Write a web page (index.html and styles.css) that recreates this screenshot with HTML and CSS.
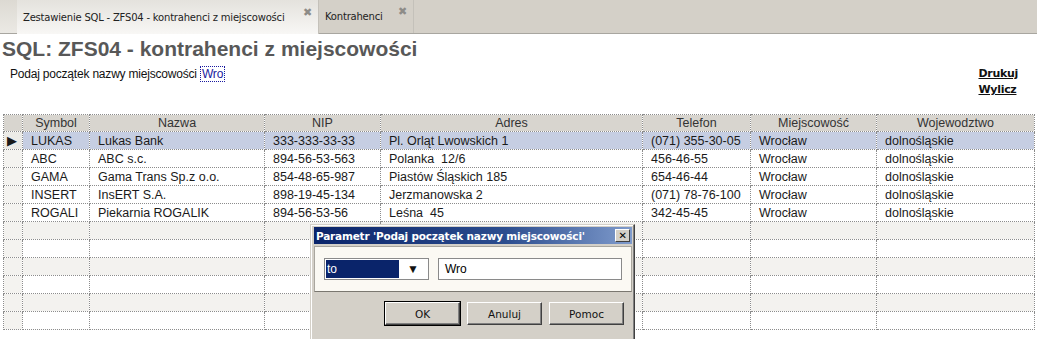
FILE: index.html
```html
<!DOCTYPE html>
<html lang="pl">
<head>
  <meta charset="UTF-8" />
  <title>Zestawienie SQL - ZFS04</title>
  <link rel="stylesheet" href="styles.css">
</head>
<body>
  <div class="tabs">
    <div class="tab-gap"></div>
    <div class="tab active">Zestawienie SQL - ZFS04 - kontrahenci z miejscowości <span class="close">&#x2716;</span></div>
    <div class="tab">Kontrahenci <span class="close">&#x2716;</span></div>
  </div>

  <div class="page">
    <h1 class="title">SQL: ZFS04 - kontrahenci z miejscowości</h1>
    <div class="params">
      <div class="param">Podaj początek nazwy miejscowości <a href="#" class="param-val">Wro</a></div>
      <div class="actions">
        <a href="#">Drukuj</a>
        <a href="#">Wylicz</a>
      </div>
    </div>

    <table class="grid">
      <colgroup>
        <col style="width:19px"><col style="width:67px"><col style="width:175px"><col style="width:116px">
        <col style="width:262px"><col style="width:108px"><col style="width:126px"><col style="width:158px">
      </colgroup>
      <thead>
        <tr><th></th><th>Symbol</th><th>Nazwa</th><th>NIP</th><th>Adres</th><th>Telefon</th><th>Miejscowość</th><th>Wojewodztwo</th></tr>
      </thead>
      <tbody>
        <tr class="sel"><td class="ind">&#9654;</td><td>LUKAS</td><td>Lukas Bank</td><td>333-333-33-33</td><td>Pl. Orląt Lwowskich 1</td><td>(071) 355-30-05</td><td>Wrocław</td><td>dolnośląskie</td></tr>
        <tr><td class="ind"></td><td>ABC</td><td>ABC s.c.</td><td>894-56-53-563</td><td>Polanka&nbsp; 12/6</td><td>456-46-55</td><td>Wrocław</td><td>dolnośląskie</td></tr>
        <tr><td class="ind"></td><td>GAMA</td><td>Gama Trans Sp.z o.o.</td><td>854-48-65-987</td><td>Piastów Śląskich 185</td><td>654-46-44</td><td>Wrocław</td><td>dolnośląskie</td></tr>
        <tr><td class="ind"></td><td>INSERT</td><td>InsERT S.A.</td><td>898-19-45-134</td><td>Jerzmanowska 2</td><td>(071) 78-76-100</td><td>Wrocław</td><td>dolnośląskie</td></tr>
        <tr><td class="ind"></td><td>ROGALI</td><td>Piekarnia ROGALIK</td><td>894-56-53-56</td><td>Leśna&nbsp; 45</td><td>342-45-45</td><td>Wrocław</td><td>dolnośląskie</td></tr>
        <tr class="empty odd"><td class="ind"></td><td></td><td></td><td></td><td></td><td></td><td></td><td></td></tr>
        <tr class="empty"><td class="ind"></td><td></td><td></td><td></td><td></td><td></td><td></td><td></td></tr>
        <tr class="empty odd"><td class="ind"></td><td></td><td></td><td></td><td></td><td></td><td></td><td></td></tr>
        <tr class="empty"><td class="ind"></td><td></td><td></td><td></td><td></td><td></td><td></td><td></td></tr>
        <tr class="empty odd"><td class="ind"></td><td></td><td></td><td></td><td></td><td></td><td></td><td></td></tr>
        <tr class="empty"><td class="ind"></td><td></td><td></td><td></td><td></td><td></td><td></td><td></td></tr>
      </tbody>
    </table>
  </div>

  <div class="dialog">
    <div class="dlg-title">
      <span>Parametr 'Podaj początek nazwy miejscowości'</span>
      <span class="dlg-x">&#x2715;</span>
    </div>
    <div class="dlg-panel">
      <div class="combo">
        <span class="combo-val">to</span>
        <span class="combo-btn">&#9660;</span>
      </div>
      <div class="text-input">Wro</div>
    </div>
    <div class="dlg-buttons">
      <button class="btn default">OK</button>
      <button class="btn">Anuluj</button>
      <button class="btn">Pomoc</button>
    </div>
  </div>
</body>
</html>
```

FILE: styles.css
```css
* {
  box-sizing: border-box;
}
body {
  margin: 0;
  background: #fff;
  font-family: 'Liberation Sans', Arial, sans-serif;
  position: relative;
  height: 339px;
  overflow: hidden;
}
.tabs {
  display: flex;
  align-items: flex-end;
  height: 34px;
  background: #d4d0c8;
  border-bottom: 1px solid #a8a6a0;
}
.tab-gap {
  width: 17px;
  height: 34px;
  background: linear-gradient(#dcd9d2, #ebe9e4);
}
.tab {
  height: 33px;
  display: flex;
  align-items: center;
  padding: 0 6px 0 6px;
  font-family: 'DejaVu Sans', sans-serif;
  font-size: 10px;
  letter-spacing: -0.2px;
  color: #222;
  border-right: 1px solid #c4c1ba;
}
.tab.active {
  width: 302px;
  background: linear-gradient(#e4e2dd, #f8f7f5);
  margin-bottom: -1px;
  height: 34px;
}
.tab:not(.active) {
  width: 95px;
  overflow: hidden;
}
.close {
  margin-left: auto;
  color: #8e8c88;
  font-size: 11px;
  position: relative;
  top: -5px;
}
.page {
  padding: 0 3px;
}
.title {
  margin: 4px 0 0 -1px;
  font-size: 21px;
  font-weight: bold;
  color: #585858;
  line-height: 22px;
}
.params {
  display: flex;
  justify-content: space-between;
  margin-top: 7px;
  height: 47px;
}
.param {
  font-size: 12px;
  color: #111;
  padding-left: 7px;
  letter-spacing: -0.2px;
}
.param-val {
  color: #1a1aa0;
  text-decoration: none;
  border: 1px dotted #1a1aa0;
  padding: 0 1px;
}
.actions {
  display: flex;
  flex-direction: column;
  align-items: flex-start;
  gap: 3px;
  padding-right: 16px;
}
.actions a {
  font-size: 11px;
  font-weight: bold;
  color: #111;
  font-family: 'DejaVu Sans', sans-serif;
  letter-spacing: -0.3px;
}
.grid {
  border-collapse: collapse;
  table-layout: fixed;
  width: 1031px;
  font-size: 12.5px;
  color: #1a1a1a;
}
.grid th, .grid td {
  border: 1px dotted #8c8c8c;
  height: 18px;
  padding: 0 8px;
  white-space: nowrap;
  overflow: hidden;
  line-height: 16px;
}
.grid th {
  background: #d8d5cf;
  font-weight: normal;
  color: #333;
  height: 17px;
}
.grid td.ind {
  padding: 0 0 0 3px;
  font-size: 13px;
  background: #f4f3f0;
}
.grid tr.sel td {
  background: #c6cee2;
}
.grid tr.sel td.ind {
  background: #ecebe7;
}
.grid tr.empty.odd td {
  background: #f3f2ef;
}
.dialog {
  position: absolute;
  left: 310px;
  top: 224px;
  width: 325px;
  height: 122px;
  background: #d4d0c8;
  border: 1px solid #d4d0c8;
  border-right-color: #404040;
  box-shadow: inset -1px 0 #808080, inset 1px 1px #fff;
  padding: 2px 2px 0 3px;
}
.dlg-title {
  height: 17px;
  background: linear-gradient(to right, #0a246a, #2c4d8e 60%, #7f9bcc);
  display: flex;
  align-items: center;
  justify-content: space-between;
  padding: 0 2px 0 2px;
  color: #fff;
  font-family: 'DejaVu Sans', sans-serif;
  font-size: 10.5px;
  font-weight: bold;
  letter-spacing: -0.2px;
}
.dlg-x {
  width: 15px;
  height: 13px;
  background: #d4d0c8;
  color: #000;
  font-size: 10px;
  display: flex;
  align-items: center;
  justify-content: center;
  border: 1px solid;
  border-color: #fff #404040 #404040 #fff;
}
.dlg-panel {
  margin-top: 2px;
  height: 46px;
  background: #fbf9f3;
  border: 1px solid #a9a69e;
  border-bottom-color: #7a7770;
  display: flex;
  align-items: center;
  gap: 9px;
  padding: 0 9px;
}
.combo {
  width: 106px;
  height: 22px;
  border: 1px solid #8a8a8a;
  background: #fff;
  display: flex;
  align-items: center;
  padding: 1px;
}
.combo-val {
  flex: 1;
  height: 18px;
  background: #0a246a;
  color: #fff;
  font-size: 12px;
  line-height: 18px;
  padding-left: 1px;
}
.combo-btn {
  width: 28px;
  text-align: center;
  font-size: 12px;
  color: #111;
}
.text-input {
  width: 186px;
  height: 22px;
  border: 1px solid #8a8a8a;
  background: #fff;
  font-size: 12px;
  line-height: 20px;
  padding-left: 6px;
}
.dlg-buttons {
  display: flex;
  justify-content: flex-end;
  gap: 7px;
  padding: 10px 8px 0 0;
}
.btn {
  width: 75px;
  height: 23px;
  background: #d4d0c8;
  border: 1px solid;
  border-color: #fff #404040 #404040 #fff;
  box-shadow: inset -1px -1px #808080;
  font-family: 'DejaVu Sans', sans-serif;
  font-size: 10.5px;
  color: #111;
  padding: 0;
}
.btn.default {
  outline: 1px solid #000;
}
```
